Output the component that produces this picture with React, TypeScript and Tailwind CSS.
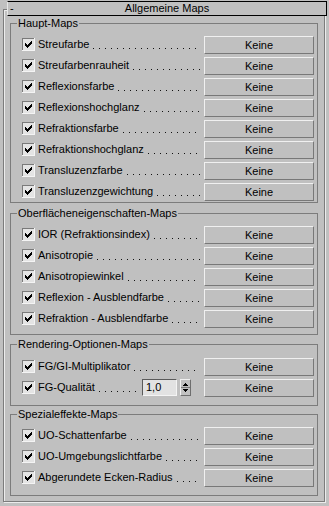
type Row = { label: string; spinner?: boolean }

interface Group {
  title: string
  boxClass: string
  bodyClass: string
  rows: Row[]
}

const groups: Group[] = [
  {
    title: 'Haupt-Maps',
    boxClass: 'mt-0',
    bodyClass: 'pt-[4px] pb-0',
    rows: [
      { label: 'Streufarbe' },
      { label: 'Streufarbenrauheit' },
      { label: 'Reflexionsfarbe' },
      { label: 'Reflexionshochglanz' },
      { label: 'Refraktionsfarbe' },
      { label: 'Refraktionshochglanz' },
      { label: 'Transluzenzfarbe' },
      { label: 'Transluzenzgewichtung' },
    ],
  },
  {
    title: 'Oberflächeneigenschaften-Maps',
    boxClass: 'mt-[4px]',
    bodyClass: 'pt-[4px] pb-[5px]',
    rows: [
      { label: 'IOR (Refraktionsindex)' },
      { label: 'Anisotropie' },
      { label: 'Anisotropiewinkel' },
      { label: 'Reflexion - Ausblendfarbe' },
      { label: 'Refraktion - Ausblendfarbe' },
    ],
  },
  {
    title: 'Rendering-Optionen-Maps',
    boxClass: 'mt-[3px]',
    bodyClass: 'pt-[5px] pb-[7px]',
    rows: [{ label: 'FG/GI-Multiplikator' }, { label: 'FG-Qualität', spinner: true }],
  },
  {
    title: 'Spezialeffekte-Maps',
    boxClass: 'mt-[2px]',
    bodyClass: 'pt-[4px] pb-[7px]',
    rows: [
      { label: 'UO-Schattenfarbe' },
      { label: 'UO-Umgebungslichtfarbe' },
      { label: 'Abgerundete Ecken-Radius' },
    ],
  },
]

// classic 7x7 check glyph, one [x0, x1] run per pixel row
const checkRuns: [number, number][][] = [
  [[6, 6]],
  [[5, 6]],
  [[0, 0], [4, 6]],
  [[0, 1], [3, 5]],
  [[0, 4]],
  [[1, 3]],
  [[2, 2]],
]

const checkPath = checkRuns
  .flatMap((runs, y) => runs.map(([a, b]) => `M${a + 3} ${y + 3}h${b - a + 1}v1h-${b - a + 1}z`))
  .join('')

function CheckBox() {
  return (
    <svg width="13" height="13" viewBox="0 0 13 13" className="shrink-0" shapeRendering="crispEdges">
      <rect x="0" y="0" width="13" height="13" fill="#f4f4f4" />
      <rect x="0" y="0" width="12" height="12" fill="#7a7a7a" />
      <rect x="1" y="1" width="11" height="11" fill="#e4e4e4" />
      <path d={checkPath} fill="#000" />
    </svg>
  )
}

function Spinner() {
  return (
    <div className="ml-[3px] flex h-[17px] w-[11px] shrink-0 flex-col border border-t-[#f0f0f0] border-l-[#f0f0f0] border-b-[#6e6e6e] border-r-[#6e6e6e]">
      <svg width="9" height="15" viewBox="0 0 9 15" shapeRendering="crispEdges">
        <path d="M4 3h1v1h-1zM3 4h3v1h-3zM2 5h5v1h-5z" fill="#000" />
        <rect x="0" y="7" width="9" height="1" fill="#7a7a7a" />
        <path d="M2 9h5v1h-5zM3 10h3v1h-3zM4 11h1v1h-1z" fill="#000" />
      </svg>
    </div>
  )
}

function MapRow({ row }: { row: Row }) {
  return (
    <div className="flex h-[21px] w-full items-center pl-[11px] pr-[3px]">
      <CheckBox />
      <span className="ml-[3px] shrink-0 whitespace-nowrap">{row.label}</span>
      {/* dotted leader */}
      <span className="mr-[2px] min-w-0 flex-1 self-stretch bg-[linear-gradient(to_right,transparent_4px,#111_4px,#111_5px,transparent_5px)] bg-[length:6px_1px] bg-[position:0_14px] bg-repeat-x" />
      {row.spinner && (
        <>
          <div className="ml-[3px] flex h-[17px] w-[35px] shrink-0 items-center border border-t-[#5a5a5a] border-l-[#5a5a5a] border-b-[#f4f4f4] border-r-[#f4f4f4] bg-[#e2e2e2] pl-[3px]">
            1,0
          </div>
          <Spinner />
          <div className="w-[11px] shrink-0" />
        </>
      )}
      <button className="ml-[2px] h-[18px] w-[110px] shrink-0 border border-t-[#f0f0f0] border-l-[#f0f0f0] border-b-[#787878] border-r-[#787878] bg-[#c0c0c0] text-center leading-[16px] text-black">
        Keine
      </button>
    </div>
  )
}

export default function App() {
  return (
    <div className="h-[506px] w-[329px] overflow-hidden bg-[#c0c0c0] pt-[1px] font-['Liberation_Sans',Arial,sans-serif] text-[11px] leading-[13px] text-black">
      <div className="relative z-10 ml-[7px] flex h-[15px] w-[320px] items-center border border-t-black border-r-black border-b-black border-l-[#e6e6e6] bg-[#c0c0c0]">
        <span className="absolute left-[2px] top-[0px]">-</span>
        <span className="w-full text-center">Allgemeine Maps</span>
      </div>
      <div className="-mt-[7px] ml-[3px] w-[322px] border border-[#7c7c7c] px-[6px] pt-[7px] pb-[5px] shadow-[inset_1px_1px_0_#ececec,1px_1px_0_#ececec]">
        {groups.map((g) => (
          <fieldset key={g.title} className={`w-[308px] min-w-0 border border-[#7c7c7c] ${g.boxClass}`}>
            <legend className="ml-[6px] px-[1px] leading-[13px]">{g.title}</legend>
            <div className={g.bodyClass}>
              {g.rows.map((r) => (
                <MapRow key={r.label} row={r} />
              ))}
            </div>
          </fieldset>
        ))}
      </div>
    </div>
  )
}
